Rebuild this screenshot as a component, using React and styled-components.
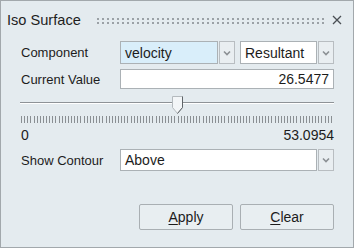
import React from "react";
import styled, { createGlobalStyle } from "styled-components";

const Global = createGlobalStyle`
  body {
    margin: 0;
    font-family: "Liberation Sans", Arial, sans-serif;
    background: #ffffff;
  }
`;

const Chevron = () => (
  <svg width="8" height="6" viewBox="0 0 8 6">
    <path d="M1 1.5 L4 4.5 L7 1.5" fill="none" stroke="#8b9094" strokeWidth="1.6" />
  </svg>
);

const Combo = ({ value, tint }) => (
  <ComboWrap>
    <ComboField tint={tint}>{value}</ComboField>
    <ArrowButton>
      <Chevron />
    </ArrowButton>
  </ComboWrap>
);

const Ticks = ({ count, width }) => {
  const step = width / (count - 1);
  return (
    <svg width={width} height="7" shapeRendering="crispEdges">
      {Array.from({ length: count }).map((_, i) => {
        const x = Math.round(i * step) + 0.5;
        return <line key={i} x1={x} x2={x} y1="0" y2="7" stroke="#8a8f93" />;
      })}
    </svg>
  );
};

const App = () => {
  const min = 0;
  const max = 53.0954;
  const value = 26.5477;
  const pos = (value - min) / (max - min);

  return (
    <>
      <Global />
      <Window>
        <TitleBar>
          <Title>Iso Surface</Title>
          <Grip>
            <svg width="100%" height="7" shapeRendering="crispEdges">
              <defs>
                <pattern id="grip" width="5" height="4" patternUnits="userSpaceOnUse">
                  <rect x="0" y="0" width="2" height="2" fill="#9ba1a6" />
                </pattern>
              </defs>
              <rect x="0" y="0" width="100%" height="6" fill="url(#grip)" />
            </svg>
          </Grip>
          <Close>
            <svg width="10" height="10" viewBox="0 0 10 10">
              <path d="M1 1 L9 9 M9 1 L1 9" stroke="#4a4f54" strokeWidth="1.3" />
            </svg>
          </Close>
        </TitleBar>

        <Form>
          <Row>
            <Label>Component</Label>
            <Combo value="velocity" tint />
            <span />
            <Combo value="Resultant" />
          </Row>

          <Row top={5} h={20}>
            <Label>Current Value</Label>
            <ValueField>{value}</ValueField>
          </Row>

          <Slider>
            <Track />
            <Thumb style={{ left: `${pos * 312 - 4}px` }}>
              <svg width="12" height="19" viewBox="0 0 12 19">
                <path d="M0.5 0.5 H10.5 V11.5 L5.5 17.5 L0.5 11.5 Z" fill="#f3f6f8" stroke="#b4babe" />
                <path d="M10.5 0.5 V11.5 L5.5 17.5" fill="none" stroke="#5f6468" />
              </svg>
            </Thumb>
            <TickRow>
              <Ticks count={101} width={313} />
            </TickRow>
          </Slider>

          <Range>
            <span>{min}</span>
            <span>{max}</span>
          </Range>

          <Row top={7} h={22}>
            <Label>Show Contour</Label>
            <Wide>
              <Combo value="Above" />
            </Wide>
          </Row>

          <Buttons>
            <Button>
              <u>A</u>pply
            </Button>
            <Button>
              <u>C</u>lear
            </Button>
          </Buttons>
        </Form>
      </Window>
    </>
  );
};

export default App;

const Window = styled.div`
  width: 354px;
  height: 248px;
  box-sizing: border-box;
  border: 1px solid #a2a8ac;
  background: #e4ebef;
  color: #1c1c1c;
  font-size: 13px;
`;

const TitleBar = styled.div`
  height: 38px;
  display: flex;
  align-items: center;
  padding: 0 11px 0 6px;
`;

const Title = styled.div`
  font-size: 14.6px;
  color: #1e1e1e;
  width: 90px;
`;

const Grip = styled.div`
  flex: 1;
  height: 7px;
  margin-top: 3px;
  margin-right: 8px;
  display: flex;
`;

const Close = styled.div`
  width: 10px;
  height: 10px;
  display: flex;
`;

const Form = styled.div`
  padding: 2px 19px 0 19px;
`;

const Row = styled.div`
  display: grid;
  grid-template-columns: 100px 115px 5px 94px;
  height: ${(p) => p.h || 23}px;
  margin-top: ${(p) => p.top || 0}px;
  align-items: stretch;
`;

const Label = styled.div`
  display: flex;
  align-items: center;
  padding-left: 1px;
`;

const ComboWrap = styled.div`
  display: flex;
  height: 100%;
`;

const ComboField = styled.div`
  flex: 1;
  display: flex;
  align-items: center;
  padding-left: 4px;
  border: 1px solid #abb1b5;
  background: ${(p) => (p.tint ? "#d9eefa" : "#ffffff")};
  font-size: 14px;
`;

const ArrowButton = styled.div`
  width: 14px;
  margin-left: 1px;
  display: flex;
  align-items: center;
  justify-content: center;
  border: 1px solid #b8bdc1;
  background: #e9eef1;
`;

const ValueField = styled.div`
  grid-column: 2 / 5;
  display: flex;
  align-items: center;
  justify-content: flex-end;
  padding-right: 4px;
  border: 1px solid #abb1b5;
  background: #ffffff;
  font-size: 14px;
`;

const Wide = styled.div`
  grid-column: 2 / 5;
`;

const Slider = styled.div`
  position: relative;
  height: 34px;
  margin-top: 5px;
`;

const Track = styled.div`
  position: absolute;
  left: 0;
  right: 0;
  top: 8px;
  height: 1px;
  background: #8e9397;
  border-bottom: 1px solid #ffffff;
`;

const Thumb = styled.div`
  position: absolute;
  top: 2px;
  display: flex;
`;

const TickRow = styled.div`
  position: absolute;
  left: 1px;
  top: 22px;
  display: flex;
`;

const Range = styled.div`
  display: flex;
  justify-content: space-between;
  font-size: 14px;
  height: 14px;
  line-height: 14px;
  padding-left: 1px;
`;

const Buttons = styled.div`
  display: flex;
  justify-content: flex-end;
  gap: 7px;
  margin-top: 33px;
`;

const Button = styled.button`
  width: 94px;
  height: 26px;
  border: 1px solid #a9afb3;
  border-radius: 2px;
  background: #e8eef1;
  font-family: "Liberation Sans", Arial, sans-serif;
  font-size: 14px;
  color: #1c1c1c;
  padding: 0;

  u {
    text-decoration-thickness: 1px;
    text-underline-offset: 2px;
  }
`;
